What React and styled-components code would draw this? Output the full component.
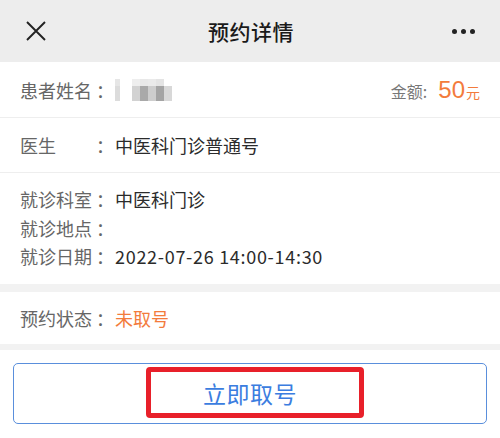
import React from 'react'
import styled, { createGlobalStyle } from 'styled-components'

const Global = createGlobalStyle`
body{
  margin:0;
  background:#fff;
  font-family:"Noto Sans CJK SC","Noto Sans",sans-serif;
}
`

const Page = styled.div`
width:500px;
height:438px;
overflow:hidden;
background:#fff;
display:flex;
flex-direction:column;
`

const Header = styled.div`
height:62px;
flex-shrink:0;
background:#ededed;
display:flex;
align-items:center;
justify-content:space-between;
padding:0 25px 0 26px;
box-sizing:border-box;
`

const Title = styled.div`
font-size:21px;
font-weight:500;
color:#1a1a1a;
letter-spacing:0.5px;
margin-left:4px;
`

const Dots = styled.div`
display:flex;
gap:4px;
`

const Dot = styled.span`
width:5px;
height:5px;
border-radius:50%;
background:#222;
`

const Row = styled.div`
height:${p => p.h}px;
flex-shrink:0;
display:flex;
align-items:center;
justify-content:space-between;
padding:0 20px;
box-sizing:border-box;
border-bottom:${p => (p.line ? '1px solid #eeeeee' : 'none')};
`

const Block = styled.div`
padding:12px 20px 13px;
display:flex;
flex-direction:column;
`

const Line = styled.div`
display:flex;
align-items:center;
height:28.5px;
font-size:18px;
`

const Label = styled.span`
width:72px;
color:#666;
font-size:18px;
white-space:nowrap;
`

const Colon = styled.span`
width:23px;
color:#666;
font-size:18px;
padding-left:4px;
box-sizing:border-box;
`

const Value = styled.span`
color:${p => (p.orange ? '#f37b3c' : '#2b2b2b')};
font-size:18px;
letter-spacing:${p => (p.wide ? '0.7px' : '0')};
white-space:nowrap;
`

const Band = styled.div`
height:${p => p.h}px;
flex-shrink:0;
background:#f2f2f2;
`

const Masked = styled.div`
display:grid;
grid-template-columns:5px 12px repeat(5, 8px);
grid-template-rows:7px 15px;
filter:blur(0.7px);
`

const Cell = styled.span`
background:${p => p.c};
grid-row:${p => p.row || 'auto'};
`

const Fee = styled.div`
display:flex;
align-items:baseline;
color:#777;
font-size:16px;
`

const FeeNum = styled.span`
color:#f37b3c;
font-size:24px;
margin-left:11px;
font-family:"Liberation Sans","Noto Sans",sans-serif;
`

const FeeUnit = styled.span`
color:#f37b3c;
font-size:14px;
margin-left:1px;
`

const Footer = styled.div`
padding:13px 13px 0;
flex:1;
`

const Button = styled.div`
position:relative;
height:61px;
border:1.5px solid #5a8fdc;
border-radius:5px;
box-sizing:border-box;
display:flex;
align-items:center;
justify-content:center;
color:#3b7de0;
font-size:23px;
letter-spacing:0.5px;
`

const Mark = styled.div`
position:absolute;
left:132px;
top:3px;
width:218px;
height:51px;
border:5px solid #e8202a;
border-radius:4px;
box-sizing:border-box;
`

const Close = () => (
  <svg width="20" height="20" viewBox="0 0 20 20">
    <path d="M1 1L19 19M19 1L1 19" stroke="#222" strokeWidth="1.9" fill="none" />
  </svg>
)

const Field = ({ label, children, orange, wide }) => (
  <Line>
    <Label>{label}</Label>
    <Colon>：</Colon>
    <Value orange={orange} wide={wide}>{children}</Value>
  </Line>
)

const topRow = ['#e6e6e6', '#fff', '#eeeeee', '#e8e8e8', '#eaeaea', '#e4e4e4', '#fff']
const bottomRow = ['#dcdcdc', '#fff', '#d2d2d2', '#a9a9a9', '#cdcdcd', '#a4a4a4', '#d8d8d8']

const App = () => {
  return (
    <Page>
      <Global />
      <Header>
        <Close />
        <Title>预约详情</Title>
        <Dots>
          <Dot />
          <Dot />
          <Dot />
        </Dots>
      </Header>

      <Row h={56} line>
        <Line>
          <Label>患者姓名</Label>
          <Colon>：</Colon>
          <Masked>
            {topRow.map((c, i) => <Cell key={'t' + i} c={c} row={1} />)}
            {bottomRow.map((c, i) => <Cell key={'b' + i} c={c} row={2} />)}
          </Masked>
        </Line>
        <Fee>
          金额:
          <FeeNum>50</FeeNum>
          <FeeUnit>元</FeeUnit>
        </Fee>
      </Row>

      <Row h={55} line>
        <Field label="医生">中医科门诊普通号</Field>
      </Row>

      <Block>
        <Field label="就诊科室">中医科门诊</Field>
        <Field label="就诊地点"></Field>
        <Field label="就诊日期" wide>2022-07-26 14:00-14:30</Field>
      </Block>

      <Band h={8} />

      <Row h={52}>
        <Field label="预约状态" orange>未取号</Field>
      </Row>

      <Band h={6} />

      <Footer>
        <Button>
          立即取号
          <Mark />
        </Button>
      </Footer>
    </Page>
  )
}

export default App
